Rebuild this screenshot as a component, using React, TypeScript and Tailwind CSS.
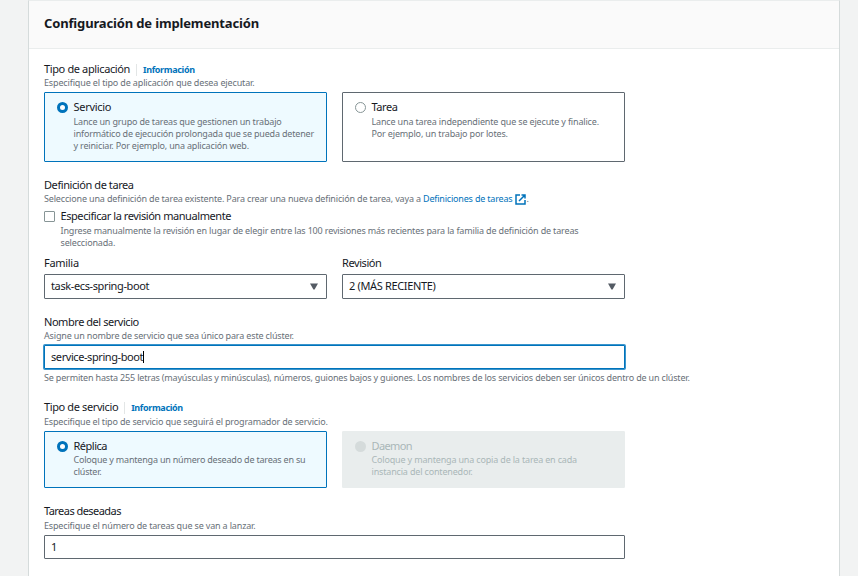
import type { ReactNode } from 'react';

const label = 'block h-[14px] whitespace-nowrap text-[11px] leading-[14px] text-[#16191f]';
const hintBase = 'block whitespace-nowrap text-[9px] leading-[12px] text-[#687078]';
const hint = `${hintBase} tracking-[-0.18px]`;
const hintWide = `${hintBase} tracking-[-0.16px]`;

function Radio({ state }: { state: 'on' | 'off' | 'disabled' }) {
  if (state === 'on') return <span className="mt-[9px] size-[11px] shrink-0 rounded-full border-[3.5px] border-[#0073bb] bg-white" />;
  if (state === 'off') return <span className="mt-[9px] size-[11px] shrink-0 rounded-full border border-[#879596] bg-white" />;
  return <span className="mt-[9px] size-[11px] shrink-0 rounded-full bg-[#d5dbdb]" />;
}

function Tile({ state, title, lines, tall }: { state: 'on' | 'off' | 'disabled'; title: ReactNode; lines: ReactNode; tall?: boolean }) {
  const look =
    state === 'on'
      ? 'border-[#0073bb] bg-[#eefaff]'
      : state === 'off'
        ? 'border-[#5f6870] bg-white'
        : 'border-[#e9eded] bg-[#e9eded]';
  return (
    <div className={`flex w-[283px] gap-[5.5px] rounded-[1px] border pl-[12px] ${look} ${tall ? 'h-[70px]' : 'h-[57px]'}`}>
      <Radio state={state} />
      <div className="pt-[7px]">
        {title}
        <div className={tall ? 'pt-[2px]' : 'pt-px'}>{lines}</div>
      </div>
    </div>
  );
}

function Select({ children }: { children: ReactNode }) {
  return (
    <div className="flex h-[25px] w-[283px] items-center justify-between rounded-[1px] border border-[#5f6870] bg-white pl-[6px] pr-[8px]">
      <div className="pb-[2px]">{children}</div>
      <svg width="8" height="7" viewBox="0 0 8 7" className="fill-[#545b64]">
        <path d="M0 0.5h8L4.6 6.5H3.4z" />
      </svg>
    </div>
  );
}

function Info() {
  return (
    <span className="ml-[6px] flex h-[12px] items-center border-l border-[#e3e6e6] pl-[6px] text-[9px] font-bold leading-[12px] text-[#0073bb]">
      <span className="tracking-[-0.35px]">Información</span>
    </span>
  );
}

export default function App() {
  return (
    <div className="flex h-[576px] w-[858px] overflow-hidden bg-[#f2f3f3] pl-[28px] font-['Noto_Sans',sans-serif]">
      <main className="w-[812px] border-x border-t border-x-[#d5dbdb] border-t-[#eaeded] bg-white">
        <header className="flex h-[48px] items-center border-b border-[#eaeded] bg-[#fafafa] pl-[15px] pb-[4px]">
          <h1 className="whitespace-nowrap text-[13px] font-bold leading-[18px] tracking-[-0.15px] text-[#16191f]">Configuración de implementación</h1>
        </header>
        <div className="pl-[15px] pt-[13px]">
          <section className="h-[116px]">
            <div className="flex h-[15px] items-center">
              <span className={`${label} -mt-[2px] tracking-[-0.37px]`}>Tipo de aplicación</span>
              <Info />
            </div>
            <span className={`${hintBase} tracking-[-0.14px]`}>Especifique el tipo de aplicación que desea ejecutar.</span>
            <div className="mt-[3px] flex gap-[15px]">
              <Tile
                tall
                state="on"
                title={<span className={`${label} tracking-[-0.3px]`}>Servicio</span>}
                lines={
                  <>
                    <span className={hint}>Lance un grupo de tareas que gestionen un trabajo</span>
                    <span className={hint}>informático de ejecución prolongada que se pueda detener</span>
                    <span className={hint}>y reiniciar. Por ejemplo, una aplicación web.</span>
                  </>
                }
              />
              <Tile
                tall
                state="off"
                title={<span className={`${label} tracking-[-0.45px]`}>Tarea</span>}
                lines={
                  <>
                    <span className={hintWide}>Lance una tarea independiente que se ejecute y finalice.</span>
                    <span className={hintWide}>Por ejemplo, un trabajo por lotes.</span>
                  </>
                }
              />
            </div>
          </section>

          <section className="h-[78px]">
            <span className={`${label} tracking-[-0.42px]`}>Definición de tarea</span>
            <div className="mt-px flex h-[12px] items-center">
              <span className={hintWide}>Seleccione una definición de tarea existente. Para crear una nueva definición de tarea, vaya a&nbsp;</span>
              <span className="whitespace-nowrap text-[9px] leading-[12px] tracking-[-0.19px] text-[#0073bb]">Definiciones de tareas</span>
              <svg width="11" height="11" viewBox="0 0 11 11" className="ml-[3px] shrink-0 fill-none stroke-[#0073bb] stroke-[1.5]">
                <path d="M5 1H1v9h9V6M6.5 1H10v3.5M10 1L4 7" />
              </svg>
              <span className={hint}>.</span>
            </div>
            <div className="mt-[4px] flex">
              <span className="mt-[2px] size-[11px] shrink-0 rounded-[1px] border border-[#879596] bg-white" />
              <div className="pl-[5.5px]">
                <span className={`${label} tracking-[-0.43px]`}>Especificar la revisión manualmente</span>
                <span className={`${hintWide} mt-[2px]`}>Ingrese manualmente la revisión en lugar de elegir entre las 100 revisiones más recientes para la familia de definición de tareas</span>
                <span className={hintWide}>seleccionada.</span>
              </div>
            </div>
          </section>

          <section className="flex h-[59px] gap-[15px]">
            <div>
              <span className={`${label} mb-[4px] tracking-[-0.3px]`}>Familia</span>
              <Select><span className={`${label} tracking-[-0.38px]`}>task-ecs-spring-boot</span></Select>
            </div>
            <div>
              <span className={`${label} mb-[4px] tracking-[-0.42px]`}>Revisión</span>
              <Select><span className={`${label} tracking-[-0.35px]`}>2 (MÁS RECIENTE)</span></Select>
            </div>
          </section>

          <section className="h-[85px]">
            <span className={`${label} tracking-[-0.45px]`}>Nombre del servicio</span>
            <span className={`${hintWide} mt-px`}>Asigne un nombre de servicio que sea único para este clúster.</span>
            <div className="mt-[3px] flex h-[24px] w-[581px] items-center rounded-[1px] border border-[#0073bb] bg-white pl-[6px] ring-1 ring-[#3b95cc]">
              <span className={`${label} tracking-[-0.42px]`}>service-spring-boot</span>
              <span className="h-[12px] w-px bg-black" />
            </div>
            <span className={`${hintBase} mt-[3px] tracking-[-0.175px]`}>Se permiten hasta 255 letras (mayúsculas y minúsculas), números, guiones bajos y guiones. Los nombres de los servicios deben ser únicos dentro de un clúster.</span>
          </section>

          <section className="h-[104px]">
            <div className="flex h-[15px] items-center">
              <span className={`${label} -mt-[2px] tracking-[-0.38px]`}>Tipo de servicio</span>
              <Info />
            </div>
            <span className={`${hintWide} mt-px`}>Especifique el tipo de servicio que seguirá el programador de servicio.</span>
            <div className="mt-[3px] flex gap-[15px]">
              <Tile
                state="on"
                title={<span className={`${label} tracking-[-0.5px]`}>Réplica</span>}
                lines={
                  <>
                    <span className={`${hintBase} tracking-[-0.2px]`}>Coloque y mantenga un número deseado de tareas en su</span>
                    <span className={hint}>clúster.</span>
                  </>
                }
              />
              <Tile
                state="disabled"
                title={<span className="block h-[14px] text-[11px] leading-[14px] tracking-[-0.6px] text-[#aab7b8]">Daemon</span>}
                lines={
                  <div className="whitespace-nowrap text-[9px] leading-[12px] tracking-[-0.17px] text-[#aab7b8]">
                    <span className="block">Coloque y mantenga una copia de la tarea en cada</span>
                    <span className="block">instancia del contenedor.</span>
                  </div>
                }
              />
            </div>
          </section>

          <section>
            <span className={`${label} tracking-[-0.54px]`}>Tareas deseadas</span>
            <span className={`${hintWide} mt-[2px]`}>Especifique el número de tareas que se van a lanzar.</span>
            <div className="mt-[3px] flex h-[24px] w-[581px] items-center rounded-[1px] border border-[#5f6870] bg-white pl-[6px]">
              <span className={label}>1</span>
            </div>
          </section>
        </div>
      </main>
    </div>
  );
}
